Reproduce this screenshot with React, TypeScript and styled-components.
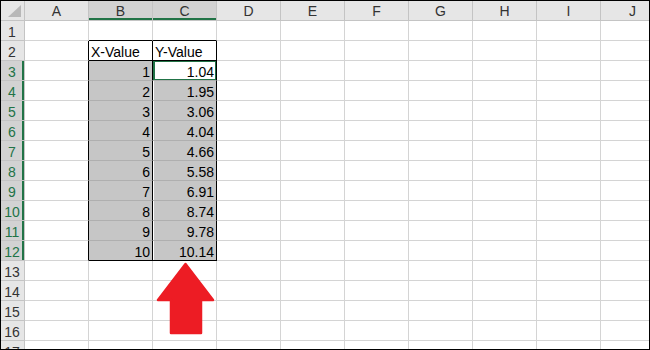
import styled, { createGlobalStyle } from "styled-components";

const GlobalStyle = createGlobalStyle`
  html, body { margin: 0; padding: 0; background: #fff; }
  body { font-family: "Liberation Sans", Arial, sans-serif; }
`;

const GREEN = "#217346";
const GRID = "#d4d4d4";
const HEAD_LINE = "#c4c4c4";
const SEL_FILL = "#c6c6c6";
const SEL_LINE = "#afafaf";

const cols = ["A", "B", "C", "D", "E", "F", "G", "H", "I", "J"];
const rows = Array.from({ length: 17 }, (_, i) => i + 1);

const data: Record<string, string> = {
  B2: "X-Value",
  C2: "Y-Value",
};
const yValues = ["1.04", "1.95", "3.06", "4.04", "4.66", "5.58", "6.91", "8.74", "9.78", "10.14"];
yValues.forEach((y, i) => {
  data["B" + (i + 3)] = String(i + 1);
  data["C" + (i + 3)] = y;
});

const Sheet = styled.div`
  position: relative;
  width: 650px;
  height: 350px;
  box-sizing: border-box;
  border: 1px solid #000;
  overflow: hidden;
  background: #fff;
`;

const Grid = styled.div`
  display: grid;
  grid-template-columns: 24px repeat(10, 64px);
  grid-auto-rows: 20px;
`;

const Corner = styled.div`
  position: relative;
  background: #e6e6e6;
  border-right: 1px solid ${HEAD_LINE};
  border-bottom: 1px solid ${HEAD_LINE};
  box-sizing: border-box;
  &::after {
    content: "";
    position: absolute;
    right: 3px;
    bottom: 3px;
    width: 0;
    height: 0;
    border-left: 13px solid transparent;
    border-bottom: 12px solid #b8b8b8;
  }
`;

const ColHead = styled.div<{ $selected?: boolean }>`
  box-sizing: border-box;
  background: ${(p) => (p.$selected ? "#d2d2d2" : "#e6e6e6")};
  border-right: 1px solid ${HEAD_LINE};
  border-bottom: 1px solid ${HEAD_LINE};
  box-shadow: ${(p) => (p.$selected ? `inset 0 -2px 0 ${GREEN}` : "none")};
  color: #333;
  font-size: 14px;
  line-height: 16px;
  padding-top: 2px;
  text-align: center;
`;

const RowHead = styled.div<{ $selected?: boolean }>`
  box-sizing: border-box;
  background: ${(p) => (p.$selected ? "#d2d2d2" : "#e6e6e6")};
  border-right: 1px solid ${HEAD_LINE};
  border-bottom: 1px solid ${HEAD_LINE};
  box-shadow: ${(p) => (p.$selected ? `inset -2px 0 0 ${GREEN}` : "none")};
  color: ${(p) => (p.$selected ? GREEN : "#333")};
  font-size: 14px;
  line-height: 17px;
  padding-top: 3px;
  padding-right: 1px;
  text-align: center;
  overflow: hidden;
`;

const Cell = styled.div<{
  $fill: string;
  $right: string;
  $bottom: string;
  $align: "left" | "right";
  $active?: boolean;
  $gap?: boolean;
}>`
  box-sizing: border-box;
  background: ${(p) => p.$fill};
  border-right: 1px solid ${(p) => p.$right};
  border-bottom: 1px solid ${(p) => p.$bottom};
  box-shadow: ${(p) =>
    p.$active
      ? `inset 0 0 0 1px ${GREEN}, inset 1px 0 0 1px ${GREEN}`
      : p.$gap
      ? "inset 1px 0 0 #fff"
      : "none"};
  padding: 3px 2px 0 2px;
  color: #000;
  font-size: 14px;
  line-height: 17px;
  text-align: ${(p) => p.$align};
  white-space: nowrap;
  overflow: hidden;
`;

const Arrow = styled.svg`
  position: absolute;
  left: 0;
  top: 0;
  pointer-events: none;
`;

function cellProps(col: number, row: number) {
  const inTable = (col === 1 || col === 2) && row >= 2 && row <= 12;
  const inSel = (col === 1 || col === 2) && row >= 3 && row <= 12;
  const active = col === 2 && row === 3;

  let right = GRID;
  let bottom = GRID;
  if (inTable || (col === 0 && row >= 2 && row <= 12)) right = "#000";
  if ((col === 1 || col === 2) && (row === 1 || row === 2 || row === 12)) bottom = "#000";
  else if (inSel) bottom = SEL_LINE;

  return {
    $fill: inSel && !active ? SEL_FILL : "#fff",
    $right: right,
    $bottom: bottom,
    $align: (row >= 3 ? "right" : "left") as "left" | "right",
    $active: active,
    $gap: inSel && col === 2 && !active,
  };
}

function RowRender({ row }: { row: number }) {
  return (
    <>
      <RowHead $selected={row >= 3 && row <= 12}>{row}</RowHead>
      {cols.map((c, i) => (
        <Cell key={c} {...cellProps(i, row)}>
          {data[c + row] ?? ""}
        </Cell>
      ))}
    </>
  );
}

export default function App() {
  return (
    <>
      <GlobalStyle />
      <Sheet>
        <Grid>
          <Corner />
          {cols.map((c, i) => (
            <ColHead key={c} $selected={i === 1 || i === 2}>
              {c}
            </ColHead>
          ))}
          {rows.map((r) => (
            <RowRender key={r} row={r} />
          ))}
        </Grid>
        <Arrow width="650" height="350" viewBox="0 0 650 350">
          <path
            d="M184.5 263 L212 299 L200 299 L200 332 L170 332 L170 299 L157 299 Z"
            fill="#ed1c24"
            stroke="#ed1c24"
            strokeWidth="2.5"
            strokeLinejoin="round"
          />
        </Arrow>
      </Sheet>
    </>
  );
}
